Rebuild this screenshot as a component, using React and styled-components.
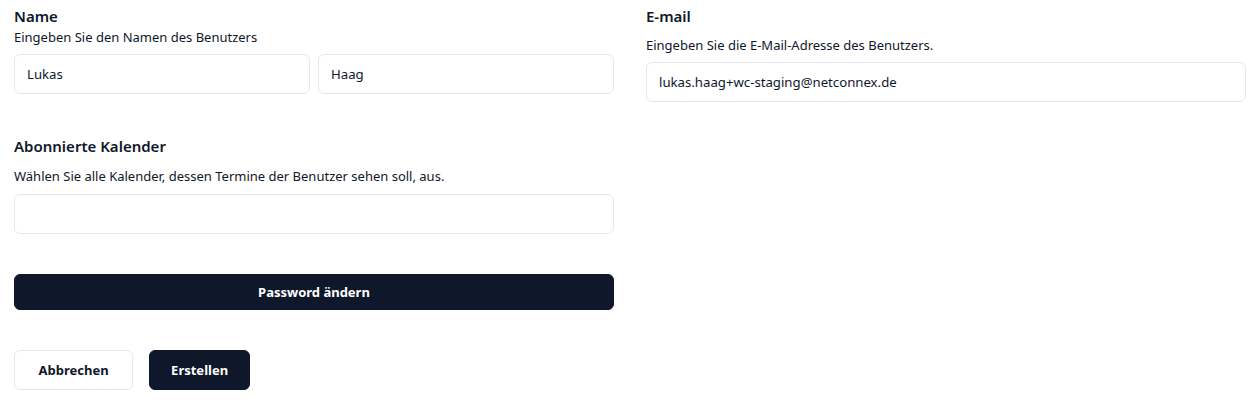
import React from "react";
import styled, { createGlobalStyle } from "styled-components";

const Global = createGlobalStyle`
  body { margin: 0; background: #fff; font-family: "Noto Sans", "Open Sans", sans-serif; color: #0f172a; }
  * { box-sizing: border-box; }
`;

const Page = styled.div`
  padding: 6px 8px 0 14px;
`;

const Grid = styled.div`
  display: grid;
  grid-template-columns: 600px 600px;
  column-gap: 32px;
  align-items: start;
`;

const Column = styled.div`
  display: flex;
  flex-direction: column;
`;

const Field = styled.div`
  display: flex;
  flex-direction: column;
  margin-bottom: ${(p) => p.$mb || 0}px;
`;

const Label = styled.div`
  font-size: 15px;
  font-weight: 600;
  line-height: 20px;
  color: #0f172a;
`;

const Description = styled.div`
  font-size: 13px;
  line-height: 20px;
  color: #0f172a;
  margin-top: ${(p) => p.$mt || 0}px;
  margin-bottom: ${(p) => p.$mb || 8}px;
`;

const Row = styled.div`
  display: flex;
  gap: 8px;
`;

const Input = styled.input`
  flex: ${(p) => (p.$grow ? "1 1 0" : "0 0 auto")};
  min-width: 0;
  width: 100%;
  height: 40px;
  border: 1px solid #e2e8f0;
  border-radius: 6px;
  padding: 0 12px;
  font-family: inherit;
  font-size: 13.2px;
  color: #0f172a;
  background: #fff;
  outline: none;
`;

const Button = styled.button`
  height: ${(p) => p.$h || 40}px;
  width: ${(p) => (p.$full ? "100%" : "auto")};
  padding: 0 ${(p) => p.$px || 24}px;
  border-radius: 6px;
  font-family: inherit;
  font-size: 13px;
  font-weight: 700;
  cursor: pointer;
  border: 1px solid ${(p) => (p.$primary ? "#0f172a" : "#e2e8f0")};
  background: ${(p) => (p.$primary ? "#0f172a" : "#fff")};
  color: ${(p) => (p.$primary ? "#fff" : "#0f172a")};
`;

const Actions = styled.div`
  display: flex;
  gap: 16px;
  margin-top: 40px;
`;

export default function App() {
  return (
    <Page>
      <Global />
      <Grid>
        <Column>
          <Field $mb={42}>
            <Label>Name</Label>
            <Description $mt={1} $mb={7}>Eingeben Sie den Namen des Benutzers</Description>
            <Row>
              <Input $grow defaultValue="Lukas" />
              <Input $grow defaultValue="Haag" />
            </Row>
          </Field>
          <Field $mb={40}>
            <Label>Abonnierte Kalender</Label>
            <Description $mt={10} $mb={8}>Wählen Sie alle Kalender, dessen Termine der Benutzer sehen soll, aus.</Description>
            <Input />
          </Field>
          <Button $primary $full $h={36}>Password ändern</Button>
          <Actions>
            <Button $px={23.5}>Abbrechen</Button>
            <Button $primary $px={21}>Erstellen</Button>
          </Actions>
        </Column>
        <Column>
          <Field>
            <Label>E-mail</Label>
            <Description $mt={9} $mb={7}>Eingeben Sie die E-Mail-Adresse des Benutzers.</Description>
            <Input defaultValue="lukas.haag+wc-staging@netconnex.de" />
          </Field>
        </Column>
      </Grid>
    </Page>
  );
}
